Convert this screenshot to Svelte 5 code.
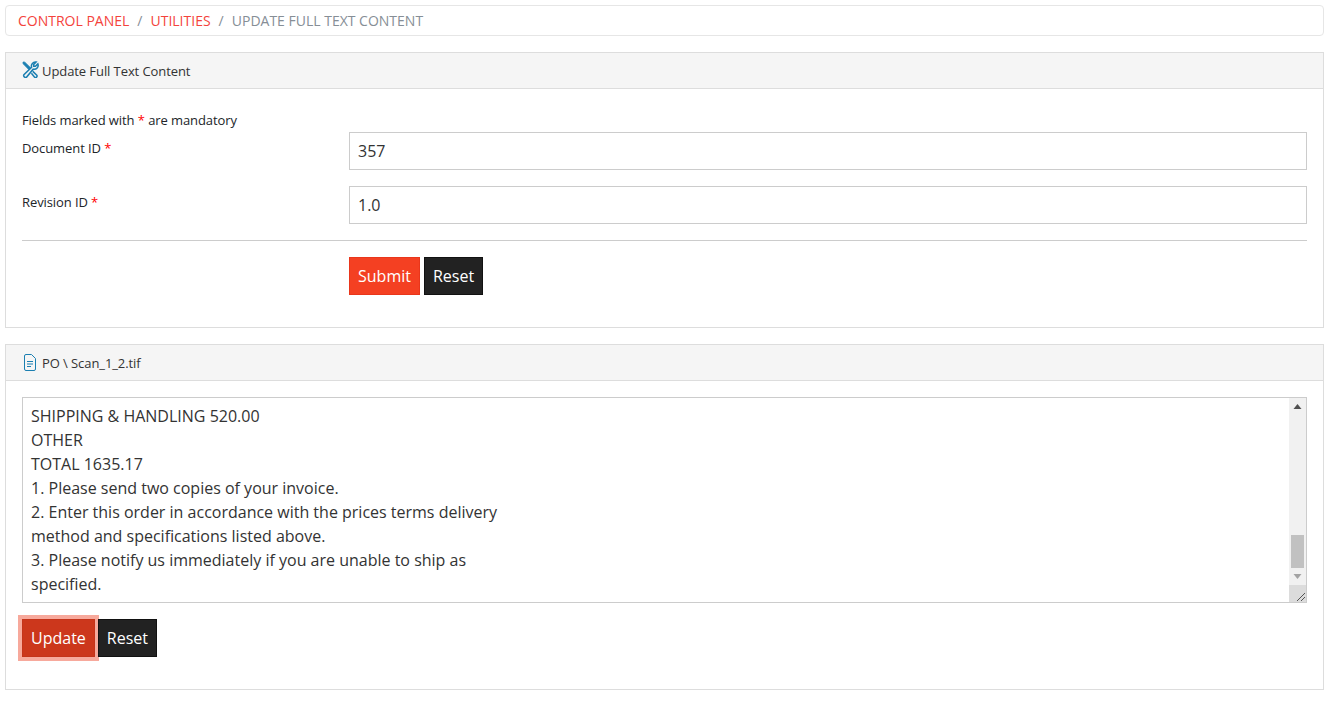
<script lang="ts">
  import { onMount } from 'svelte';

  const lines = [
    'PURCHASE ORDER',
    'P.O. NUMBER 4417',
    'DATE 03/14/2016',
    'VENDOR',
    'Northfield Office Supply',
    '2200 Commerce Drive',
    'Suite 140',
    'Columbus, OH 43215',
    'SHIP TO',
    'Receiving Department',
    '118 Industrial Parkway',
    'Dayton, OH 45402',
    'REQUISITIONER J. Miller',
    'SHIP VIA Ground',
    'F.O.B. Destination',
    'TERMS Net 30',
    'QTY UNIT DESCRIPTION UNIT PRICE TOTAL',
    '12 EA Desk Lamp 24.50 294.00',
    '6 EA Filing Cabinet 85.00 510.00',
    '20 BOX Copy Paper 9.50 190.00',
    '4 EA Toner Cartridge 18.75 75.00',
    '1 EA Label Printer 46.17 46.17',
    '',
    'SUBTOTAL 1115.17',
    'TAX 0.00',
    'SALES TAX RATE 0%',
    'DISCOUNT 0.00',
    'DEPOSIT 0.00',
    'FREIGHT INCLUDED',
    'INSURANCE 0.00',
    'SHIPPING & HANDLING 520.00',
    'OTHER',
    'TOTAL 1635.17',
    '1. Please send two copies of your invoice.',
    '2. Enter this order in accordance with the prices terms delivery',
    'method and specifications listed above.',
    '3. Please notify us immediately if you are unable to ship as',
    'specified.'
  ];

  let docId = $state('357');
  let revId = $state('1.0');
  let content = $state(lines.join('\n'));
  let contentEl: HTMLTextAreaElement;
  let updateBtn: HTMLButtonElement;

  onMount(() => {
    contentEl.scrollTop = contentEl.scrollHeight;
    updateBtn.focus();
  });
</script>

<div class="page">
  <nav class="breadcrumb">
    <a href="#top">CONTROL PANEL</a>
    <span class="sep">/</span>
    <a href="#top">UTILITIES</a>
    <span class="sep">/</span>
    <span class="current">UPDATE FULL TEXT CONTENT</span>
  </nav>

  <section class="panel">
    <header class="panel-head">
      <svg class="icon tools" width="17" height="17" viewBox="0 0 17 17" fill="none" stroke="#1b7fb1">
        <path d="M1 1 L2.8 1.2 L11 9.2 L9.2 11 L1.2 2.8 Z" fill="#1b7fb1" stroke-width=".8" />
        <path d="M10.8 10.4 L14.8 14.2 A1.5 1.5 0 0 1 12.6 16.2 L9.4 12.2" stroke-width="1.5" />
        <path d="M15.9 2.9 L13.4 5.3 L11.7 5.3 L11.7 3.6 L14.1 1.1 A4 4 0 0 0 9.6 6.3 L1.9 13.6 A1.9 1.9 0 0 0 4.6 16.1 L11.2 8.2 A4 4 0 0 0 15.9 2.9 Z" fill="#f5f5f5" stroke-width="1.5" />
      </svg>
      <span>Update Full Text Content</span>
    </header>
    <div class="panel-body">
      <p class="note">Fields marked with <span class="req">*</span> are mandatory</p>
      <div class="row">
        <label for="doc-id">Document ID <span class="req">*</span></label>
        <input id="doc-id" type="text" bind:value={docId} />
      </div>
      <div class="row">
        <label for="rev-id">Revision ID <span class="req">*</span></label>
        <input id="rev-id" type="text" bind:value={revId} />
      </div>
      <hr />
      <div class="actions offset">
        <button class="btn primary" type="button">Submit</button>
        <button class="btn dark" type="button">Reset</button>
      </div>
    </div>
  </section>

  <section class="panel">
    <header class="panel-head">
      <svg class="icon file" width="13" height="17" viewBox="0 0 13 17" fill="none" stroke="#1b7fb1">
        <path d="M1.5 2 Q1.5 .5 3 .5 L8.5 .5 L12.5 4.5 L12.5 15 Q12.5 16.5 11 16.5 L3 16.5 Q1.5 16.5 1.5 15 Z" />
        <path d="M4 7.5 H10 M4 10 H10 M4 12.5 H8" stroke-width="1" />
      </svg>
      <span>PO \ Scan_1_2.tif</span>
    </header>
    <div class="panel-body">
      <div class="editor">
        <textarea bind:this={contentEl} bind:value={content} spellcheck="false"></textarea>
        
        <div class="scrollbar" aria-hidden="true">
          <div class="arrow">
            <svg width="9" height="5" viewBox="0 0 9 5"><path d="M4.5 0 L8.5 5 H.5 Z" fill="#505050" /></svg>
          </div>
          <div class="track"><div class="thumb"></div></div>
          <div class="arrow">
            <svg width="9" height="5" viewBox="0 0 9 5"><path d="M.5 0 H8.5 L4.5 5 Z" fill="#a3a3a3" /></svg>
          </div>
          <div class="grip">
            <svg width="17" height="17" viewBox="0 0 17 17" fill="none" stroke="#555">
              <path d="M8 16 L16 8 M12 16 L16 12" />
            </svg>
          </div>
        </div>
      </div>
      <div class="actions below">
        <button class="btn update" type="button" bind:this={updateBtn}>Update</button>
        <button class="btn dark" type="button">Reset</button>
      </div>
    </div>
  </section>
</div>

<style>
  :global(body) {
    background: #fff;
    font-family: "Open Sans", sans-serif;
    font-size: 13px;
    color: #212529;
  }

  .page {
    padding: 5px 6px 11px 5px;
    display: flex;
    flex-direction: column;
    gap: 16px;
  }

  .breadcrumb {
    display: flex;
    align-items: center;
    height: 31px;
    box-sizing: border-box;
    padding: 0 12px;
    border: 1px solid #e6e6e6;
    border-radius: 4px;
    font-size: 14px;
    line-height: 21px;
    gap: 8px;
  }

  .breadcrumb a {
    color: #f4433c;
    text-decoration: none;
  }

  .sep,
  .current {
    color: #868e96;
  }

  .panel {
    border: 1px solid #ddd;
  }

  .panel-head {
    display: flex;
    align-items: center;
    height: 36px;
    box-sizing: border-box;
    padding: 0 16px;
    background: #f5f5f5;
    border-bottom: 1px solid #ddd;
    color: #333;
    letter-spacing: -0.08px;
  }

  .icon {
    margin-right: 3px;
    flex: none;
  }

  .icon.tools {
    margin-top: -2px;
  }

  .icon.file {
    margin-left: 1px;
    margin-right: 6px;
  }

  .panel-body {
    padding: 16px 16px 32px;
  }

  .note {
    margin: 0;
    padding: 5px 0 2px;
    line-height: 20px;
    letter-spacing: -0.09px;
  }

  .req {
    color: #f00;
  }

  .row {
    display: grid;
    grid-template-columns: 327px 1fr;
    margin-bottom: 16px;
  }

  .row label {
    padding-top: 6px;
    line-height: 20px;
    letter-spacing: -0.09px;
  }

  .row input {
    height: 38px;
    box-sizing: border-box;
    padding: 6px 8px;
    border: 1px solid #ccc;
    font-family: inherit;
    font-size: 16px;
    color: #333;
    outline: none;
    width: 100%;
  }

  hr {
    margin: 0 0 16px;
    border: 0;
    border-top: 1px solid #ccc;
  }

  .actions {
    display: flex;
    gap: 4px;
  }

  .actions.offset {
    padding-left: 327px;
  }

  .actions.below {
    margin-top: 16px;
    gap: 3px;
  }

  .btn {
    height: 38px;
    box-sizing: border-box;
    padding: 0 8px;
    border: 1px solid;
    font-family: inherit;
    font-size: 16px;
    color: #fff;
    cursor: pointer;
  }

  .primary {
    background: #f44022;
    border-color: #e9361b;
  }

  .update {
    background: #cc371c;
    border-color: #c4341a;
    outline: none;
    box-shadow: 0 0 0 4px #f7a99c;
  }

  .dark {
    background: #222;
    border-color: #111;
    position: relative;
  }

  .editor {
    position: relative;
  }

  textarea {
    display: block;
    width: 100%;
    height: 206px;
    box-sizing: border-box;
    padding: 6px 8px;
    border: 1px solid #ccc;
    font-family: inherit;
    font-size: 16px;
    line-height: 24px;
    color: #333;
    outline: none;
    white-space: pre;
    overflow-x: hidden;
    overflow-y: scroll;
    resize: vertical;
  }

  .scrollbar {
    position: absolute;
    top: 1px;
    right: 1px;
    bottom: 1px;
    width: 17px;
    display: flex;
    flex-direction: column;
    background: #f1f1f1;
    pointer-events: none;
  }

  .arrow {
    flex: none;
    height: 17px;
    display: flex;
    align-items: center;
    justify-content: center;
  }

  .track {
    flex: 1;
    display: flex;
    flex-direction: column;
    justify-content: flex-end;
    padding: 0 2px;
  }

  .thumb {
    height: 33px;
    background: #c1c1c1;
  }

  .grip {
    flex: none;
    height: 17px;
    background: #dcdcdc;
  }

  .grip svg {
    display: block;
  }
</style>
